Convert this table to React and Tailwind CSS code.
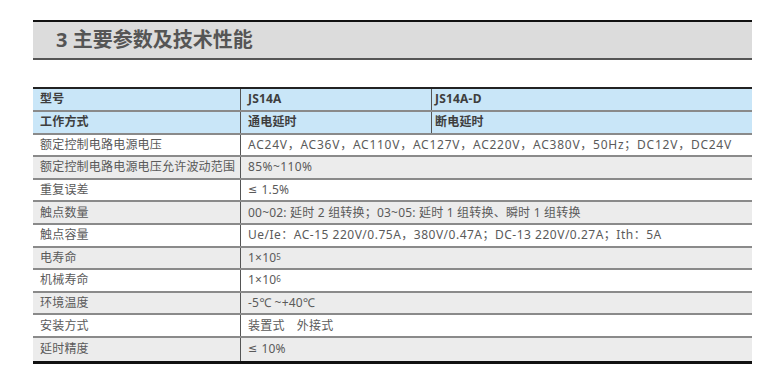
const Le = () => <span style={{ fontFamily: '"DejaVu Sans", sans-serif' }} className="text-[11px] mr-[4px]">≤</span>

const rows = [
  ["额定控制电路电源电压", "AC24V，AC36V，AC110V，AC127V，AC220V，AC380V，50Hz；DC12V，DC24V", "tracking-[0.75px]"],
  ["额定控制电路电源电压允许波动范围", "85%~110%", "tracking-[0.4px]"],
  ["重复误差", <><Le />1.5%</>, ""],
  ["触点数量", "00~02: 延时 2 组转换；03~05: 延时 1 组转换、瞬时 1 组转换", ""],
  ["触点容量", "Ue/Ie：AC-15 220V/0.75A，380V/0.47A；DC-13 220V/0.27A；Ith：5A", "tracking-[0.5px]"],
  ["电寿命", <>1×10<sup className="text-[8px] relative -top-[1px]">5</sup></>, ""],
  ["机械寿命", <>1×10<sup className="text-[8px] relative -top-[1px]">6</sup></>, ""],
  ["环境温度", "-5℃ ~+40℃", ""],
  ["安装方式", "装置式　外接式", ""],
  ["延时精度", <><Le />10%</>, ""],
]

export default function App() {
  return (
    <div
      className="w-[760px] h-[378px] bg-white pt-[20px] pl-[33px]"
      style={{ fontFamily: '"Noto Sans", "Noto Sans CJK SC", sans-serif' }}
    >
      <div className="w-[719px] h-[40px] bg-[#dcdcdc] border-t-2 border-[#111] border-b-2 border-b-[#555] flex items-center pl-[23px]">
        <h1 className="text-[20px] font-bold text-[#555] leading-none">3 主要参数及技术性能</h1>
      </div>

      <div className="w-[719px] mt-[27px] border-t-2 border-[#222] border-b-[3px] border-b-[#111] text-[12px] tracking-[0.2px]">
        <div className="flex h-[22.8px] bg-[#c9e6f8] border-b-2 border-[#8a8a8a] font-bold text-[#3e3e3e]">
          <div className="w-[208px] border-r border-[#555] pl-[7px] flex items-center">型号</div>
          <div className="w-[191px] border-r border-[#555] pl-[7px] flex items-center">JS14A</div>
          <div className="flex-1 pl-[3px] flex items-center">JS14A-D</div>
        </div>
        <div className="flex h-[22.8px] bg-[#c9e6f8] border-b-2 border-[#8a8a8a] font-bold text-[#3e3e3e]">
          <div className="w-[208px] border-r border-[#555] pl-[7px] flex items-center">工作方式</div>
          <div className="w-[191px] border-r border-[#555] pl-[7px] flex items-center">通电延时</div>
          <div className="flex-1 pl-[3px] flex items-center">断电延时</div>
        </div>
        {rows.map(([label, value, extra], i) => (
          <div
            key={i}
            className={`flex h-[22.6px] text-[#5a5a5a] ${i % 2 ? "bg-[#ececec]" : "bg-white"} ${i < rows.length - 1 ? "border-b-2 border-[#8a8a8a]" : ""}`}
          >
            <div className="w-[208px] border-r border-[#555] pl-[7px] flex items-center whitespace-nowrap">{label}</div>
            <div className={`flex-1 pl-[7px] flex items-center whitespace-nowrap ${extra}`}>{value}</div>
          </div>
        ))}
      </div>
    </div>
  )
}
